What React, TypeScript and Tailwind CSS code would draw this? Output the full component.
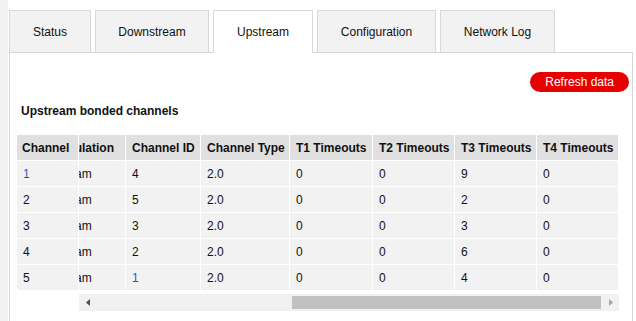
import React from "react";

type Row = { channel: string; modulation: string; id: string; type: string; t1: string; t2: string; t3: string; t4: string };

const rows: Row[] = [
  { channel: "1", modulation: "64qam", id: "4", type: "2.0", t1: "0", t2: "0", t3: "9", t4: "0" },
  { channel: "2", modulation: "64qam", id: "5", type: "2.0", t1: "0", t2: "0", t3: "2", t4: "0" },
  { channel: "3", modulation: "64qam", id: "3", type: "2.0", t1: "0", t2: "0", t3: "3", t4: "0" },
  { channel: "4", modulation: "64qam", id: "2", type: "2.0", t1: "0", t2: "0", t3: "6", t4: "0" },
  { channel: "5", modulation: "64qam", id: "1", type: "2.0", t1: "0", t2: "0", t3: "4", t4: "0" },
];

const tabs = [
  { label: "Status", w: "w-[82px]" },
  { label: "Downstream", w: "w-[114px]" },
  { label: "Upstream", w: "w-[100px]" },
  { label: "Configuration", w: "w-[119px]" },
  { label: "Network Log", w: "w-[115px]" },
];

// "1" renders bluish in the reference (subpixel fringes)
function Num({ v }: { v: string }) {
  return <span className={v === "1" ? "text-[#1d5fa6]" : ""}>{v}</span>;
}

const cols = [
  { key: "modulation", label: "Modulation", w: "w-[76px] -ml-[30px]", hp: "pl-[1px]" },
  { key: "id", label: "Channel ID", w: "w-[74px]", hp: "pl-[6px]" },
  { key: "type", label: "Channel Type", w: "w-[88px]", hp: "pl-[6px]" },
  { key: "t1", label: "T1 Timeouts", w: "w-[82px]", hp: "pl-[6px]" },
  { key: "t2", label: "T2 Timeouts", w: "w-[81px]", hp: "pl-[6px]" },
  { key: "t3", label: "T3 Timeouts", w: "w-[81px]", hp: "pl-[6px]" },
  { key: "t4", label: "T4 Timeouts", w: "w-[81px]", hp: "pl-[6px]" },
] as const;

export default function App() {
  return (
    <div className="flex min-h-[321px] w-[636px] overflow-hidden bg-white font-['Liberation_Sans',Arial,sans-serif] text-[12px] text-[#111]">
      <div className="w-[8px] shrink-0 bg-[#f2f2f2]" />
      <div className="flex flex-1 flex-col pl-[1px] pr-[3px] pt-[10px]">
        {/* tabs */}
        <div className="flex items-start gap-[4px]">
          {tabs.map((t) => {
            const active = t.label === "Upstream";
            return (
              <div
                key={t.label}
                className={
                  active
                    ? `${t.w} relative z-10 -mb-px flex h-[43px] items-center justify-center border border-b-0 border-[#d9d9d9] bg-white pb-px`
                    : `${t.w} flex h-[42px] items-center justify-center border border-b-0 border-[#d9d9d9] bg-[#f2f2f2]`
                }
              >
                {t.label}
              </div>
            );
          })}
        </div>

        {/* panel */}
        <div className="flex-1 border border-b-0 border-[#d6d6d6] pl-[7px]">
          <div className="mt-[19px] flex justify-end pr-[3px]">
            <button className="h-[20px] rounded-full bg-[#e60000] px-[15px] leading-[20px] text-white">
              Refresh data
            </button>
          </div>
          <h2 className="mt-[12px] pl-[4px] font-bold leading-[14px]">Upstream bonded channels</h2>

          <div className="mt-[17px] flex gap-px">
            {/* frozen first column */}
            <div className="flex w-[61px] shrink-0 flex-col gap-px">
              <div className="flex h-[25px] items-center bg-[#e0e0e0] pl-[5px] font-bold">Channel</div>
              {rows.map((r) => (
                <div key={r.channel} className="flex h-[25px] items-center bg-[#f2f2f2] pl-[6px]">
                  <Num v={r.channel} />
                </div>
              ))}
            </div>

            {/* scrolled part */}
            <div className="w-[540px] shrink-0">
              <div className="overflow-hidden">
                <div className="flex flex-col gap-px">
                  <div className="flex gap-px">
                    {cols.map((c) => (
                      <div key={c.key} className={`${c.w} ${c.hp} flex h-[25px] shrink-0 items-center whitespace-nowrap bg-[#e0e0e0] font-bold`}>
                        {c.label}
                      </div>
                    ))}
                  </div>
                  {rows.map((r) => (
                    <div key={r.channel} className="flex gap-px">
                      {cols.map((c) => (
                        <div key={c.key} className={`${c.w} flex h-[25px] shrink-0 items-center whitespace-nowrap bg-[#f2f2f2] pl-[6px]`}>
                          <Num v={r[c.key]} />
                        </div>
                      ))}
                    </div>
                  ))}
                </div>
              </div>

              {/* horizontal scrollbar */}
              <div className="mt-[4px] flex h-[17px] items-center bg-[#f1f1f1]">
                <div className="flex h-[17px] w-[17px] items-center justify-center">
                  <svg width="4" height="7" viewBox="0 0 4 7">
                    <path d="M4 0 L0 3.5 L4 7 Z" fill="#505050" />
                  </svg>
                </div>
                <div className="flex-1">
                  <div className="ml-[196px] h-[13px] w-[309px] bg-[#c1c1c1]" />
                </div>
                <div className="flex h-[17px] w-[17px] items-center justify-center">
                  <svg width="4" height="7" viewBox="0 0 4 7">
                    <path d="M0 0 L4 3.5 L0 7 Z" fill="#a3a3a3" />
                  </svg>
                </div>
              </div>
            </div>
          </div>
        </div>
      </div>
    </div>
  );
}
